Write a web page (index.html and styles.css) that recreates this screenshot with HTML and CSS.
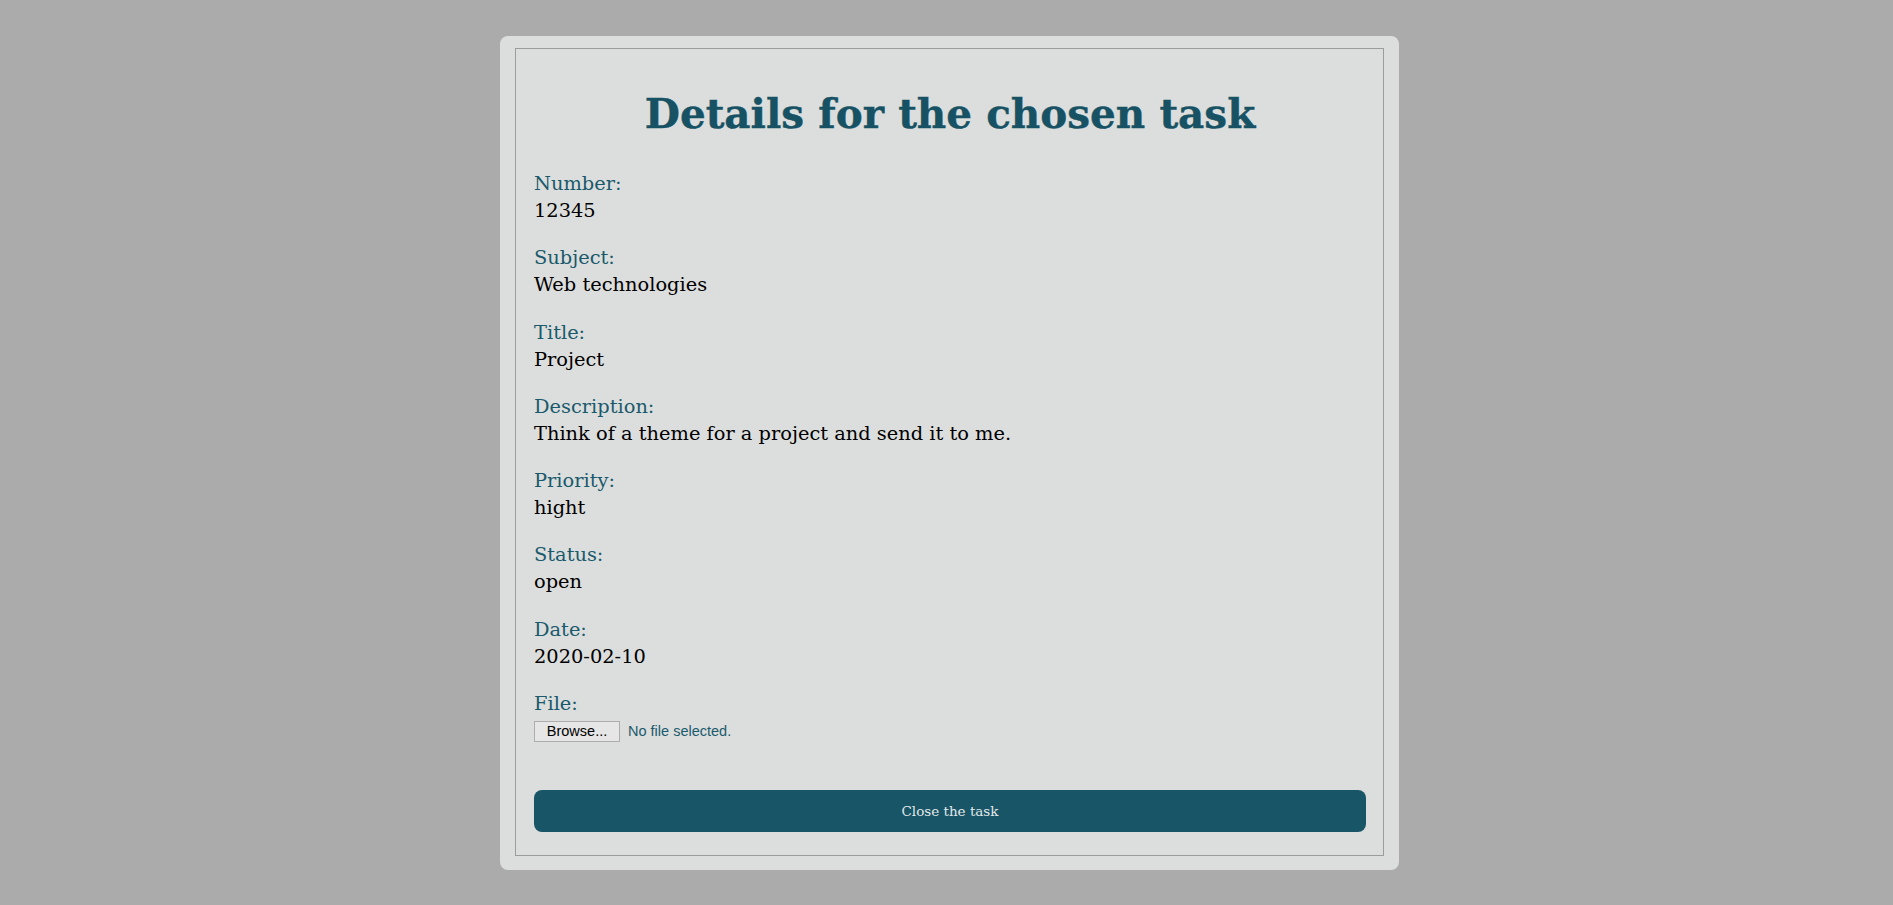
FILE: index.html
```html
<!DOCTYPE html>
<html lang="en">
<head>
<meta charset="utf-8">
<title>Task details</title>
<link rel="stylesheet" href="styles.css">
</head>
<body>
<div class="card">
  <div class="frame">
    <h1 class="title">Details for the chosen task</h1>
    <div class="field"><div class="label">Number:</div><div class="value">12345</div></div>
    <div class="field"><div class="label">Subject:</div><div class="value">Web technologies</div></div>
    <div class="field"><div class="label">Title:</div><div class="value">Project</div></div>
    <div class="field"><div class="label">Description:</div><div class="value">Think of a theme for a project and send it to me.</div></div>
    <div class="field"><div class="label">Priority:</div><div class="value">hight</div></div>
    <div class="field"><div class="label">Status:</div><div class="value">open</div></div>
    <div class="field"><div class="label">Date:</div><div class="value">2020-02-10</div></div>
    <div class="field field-file">
      <div class="label">File:</div>
      <div class="file-row"><span class="browse">Browse...</span><span class="file-status">No file selected.</span></div>
    </div>
    <button class="close-btn" type="button">Close the task</button>
  </div>
</div>
</body>
</html>
```

FILE: styles.css
```css
html, body {
  margin: 0;
  background: #ababab;
}
body {
  padding: 36px 0 33px 6px;
  font-family: "DejaVu Serif", "Liberation Serif", serif;
}
.card {
  box-sizing: border-box;
  width: 899px;
  margin: 0 auto;
  padding: 12px 15px 14px 15px;
  background: #dcdedd;
  border-radius: 8px;
}
.frame {
  border: 1px solid #9b9d9c;
  padding: 0 17px 23px 18px;
}
.title {
  margin: 40px 0 0;
  font-size: 40.5px;
  line-height: 50px;
  font-weight: bold;
  color: #165264;
  text-align: center;
  -webkit-text-stroke: 0.4px #165264;
}
.field {
  margin-top: 0;
  margin-bottom: 22.3px;
}
.title + .field {
  margin-top: 32px;
}
.label, .value {
  font-size: 19.4px;
  line-height: 25px;
}
.label {
  color: #1a5a6c;
}
.value {
  margin-top: 2px;
  color: #000;
}
.field-file {
  margin-bottom: 0;
}
.file-row {
  display: flex;
  align-items: center;
  margin-top: 4.6px;
  height: 21px;
  font-family: "Liberation Sans", "DejaVu Sans", sans-serif;
  font-size: 14.5px;
}
.browse {
  box-sizing: border-box;
  width: 86px;
  height: 21px;
  display: flex;
  align-items: center;
  justify-content: center;
  background: #e6e6e6;
  border: 1px solid #adadad;
  color: #000;
}
.file-status {
  margin-left: 8px;
  color: #1a5a6c;
}
.close-btn {
  display: block;
  width: 100%;
  height: 42px;
  margin-top: 48px;
  border: none;
  border-radius: 8px;
  background: #185566;
  color: #e3e9eb;
  font-family: "DejaVu Serif", "Liberation Serif", serif;
  font-size: 13.5px;
}
```
